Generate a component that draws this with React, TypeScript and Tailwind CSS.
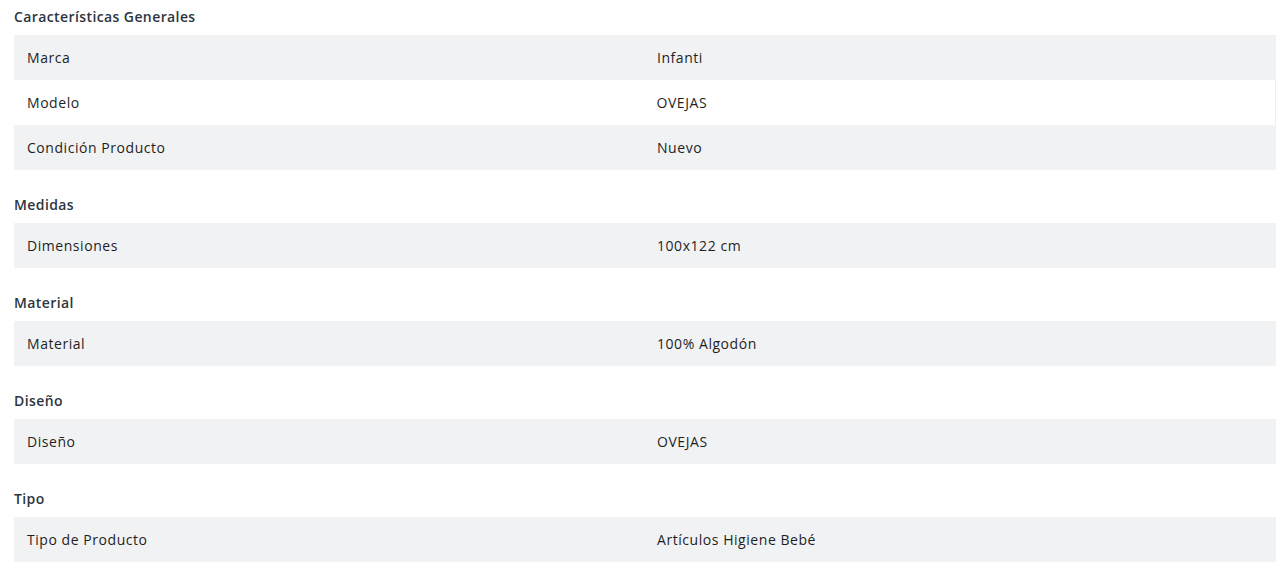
import React from 'react';

type Row = { label: string; value: string };
type Section = { title: string; rows: Row[] };

const sections: Section[] = [
  {
    title: 'Características Generales',
    rows: [
      { label: 'Marca', value: 'Infanti' },
      { label: 'Modelo', value: 'OVEJAS' },
      { label: 'Condición Producto', value: 'Nuevo' },
    ],
  },
  { title: 'Medidas', rows: [{ label: 'Dimensiones', value: '100x122 cm' }] },
  { title: 'Material', rows: [{ label: 'Material', value: '100% Algodón' }] },
  { title: 'Diseño', rows: [{ label: 'Diseño', value: 'OVEJAS' }] },
  { title: 'Tipo', rows: [{ label: 'Tipo de Producto', value: 'Artículos Higiene Bebé' }] },
];

export default function App() {
  return (
    <main
      className="min-h-screen bg-white pl-[14px] pr-[5px] pt-[7px] text-[#1f1f1f]"
      style={{ fontFamily: '"Open Sans", "Liberation Sans", sans-serif' }}
    >
      {sections.map((section) => (
        <section key={section.title} className="mb-[25px]">
          {/* Section title */}
          <h3 className="mb-2 h-5 text-[14px] font-semibold leading-5 tracking-[0.4px] text-[#2d3540]">
            {section.title}
          </h3>
          <div>
            {section.rows.map((row, i) => (
              <div
                key={row.label}
                className={`grid h-[45px] grid-cols-2 items-center text-[14px] tracking-[0.55px] ${
                  i % 2 === 0 ? 'bg-[#f1f2f4]' : 'bg-white border-r border-[#eceef0]'
                }`}
              >
                <span className="pl-[13px]">{row.label}</span>
                <span className="pl-3">{row.value}</span>
              </div>
            ))}
          </div>
        </section>
      ))}
    </main>
  );
}
